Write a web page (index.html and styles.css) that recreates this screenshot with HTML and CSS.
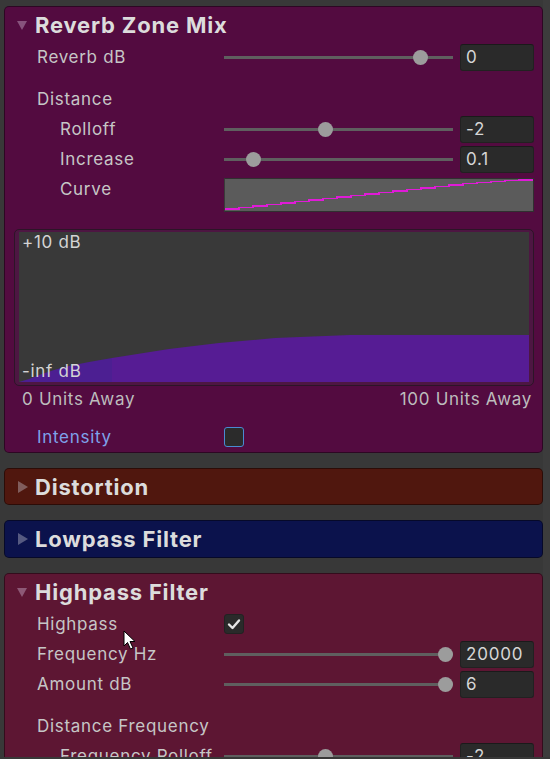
FILE: index.html
```html
<!DOCTYPE html>
<html>
<head>
<meta charset="utf-8">
<title>Audio Mixer Inspector</title>
<link rel="stylesheet" href="styles.css">
</head>
<body>
<div class="viewport">
  <div class="inspector">
    <section class="panel reverb">
      <div class="ph"><span class="tri down"></span><span class="title">Reverb Zone Mix</span></div>
      <div class="row">
        <span class="label">Reverb dB</span>
        <div class="slider"><div class="track"></div><div class="thumb" style="--p:0.884"></div></div>
        <div class="num">0</div>
      </div>
      <div class="row group">
        <span class="label">Distance</span>
      </div>
      <div class="row">
        <span class="label indent">Rolloff</span>
        <div class="slider"><div class="track"></div><div class="thumb" style="--p:0.437"></div></div>
        <div class="num">-2</div>
      </div>
      <div class="row">
        <span class="label indent">Increase</span>
        <div class="slider"><div class="track"></div><div class="thumb" style="--p:0.102"></div></div>
        <div class="num">0.1</div>
      </div>
      <div class="row curve-row">
        <span class="label indent">Curve</span>
        <div class="curve">
          <svg width="310" height="34" viewBox="0 0 310 34" shape-rendering="crispEdges">
            <polyline fill="none" stroke="#e01ad8" stroke-width="1.5" points="1,31 15,31 15,29.5 29,29.5 29,28 43,28 43,26.5 57,26.5 57,25 71,25 71,23.5 85,23.5 85,22 99,22 99,20.5 113,20.5 113,19 127,19 127,17.5 141,17.5 141,16 155,16 155,14.5 169,14.5 169,13 183,13 183,11.5 197,11.5 197,10 211,10 211,8.5 225,8.5 225,7 239,7 239,5.5 253,5.5 253,4.5 267,4.5 267,3.5 281,3.5 281,2.5 295,2.5 295,2 309,2"/>
          </svg>
        </div>
      </div>
      <div class="graph">
        <div class="graph-inner">
          <svg class="fill" width="510" height="150" viewBox="0 0 510 150" preserveAspectRatio="none">
            <polygon fill="#561c94" points="93,126 150,117 200,111 256,106 331,103 510,103 510,150 93,150"/>
            <polygon fill="#4c1f92" points="0,150 10,147 20,143 35,138 50,134 70,130 93,126 93,150"/>
          </svg>
          <span class="g-top">+10 dB</span>
          <span class="g-bot">-inf dB</span>
        </div>
      </div>
      <div class="axis"><span>0 Units Away</span><span>100 Units Away</span></div>
      <div class="row">
        <span class="label blue">Intensity</span>
        <div class="check focus"></div>
      </div>
    </section>

    <section class="panel distortion">
      <div class="ph"><span class="tri right"></span><span class="title">Distortion</span></div>
    </section>

    <section class="panel lowpass">
      <div class="ph tall"><span class="tri right"></span><span class="title">Lowpass Filter</span></div>
    </section>

    <section class="panel highpass">
      <div class="ph"><span class="tri down"></span><span class="title">Highpass Filter</span></div>
      <div class="row">
        <span class="label">Highpass</span>
        <div class="check">
          <svg width="20" height="20" viewBox="0 0 20 20"><path d="M5 10.5 L8.5 14 L15 6.5" fill="none" stroke="#e6e6e6" stroke-width="2.4" stroke-linecap="round" stroke-linejoin="round"/></svg>
        </div>
      </div>
      <div class="row">
        <span class="label">Frequency Hz</span>
        <div class="slider"><div class="track"></div><div class="thumb" style="--p:1"></div></div>
        <div class="num">20000</div>
      </div>
      <div class="row">
        <span class="label">Amount dB</span>
        <div class="slider"><div class="track"></div><div class="thumb" style="--p:1"></div></div>
        <div class="num">6</div>
      </div>
      <div class="row group">
        <span class="label">Distance Frequency</span>
      </div>
      <div class="row">
        <span class="label indent">Frequency Rolloff</span>
        <div class="slider"><div class="track"></div><div class="thumb" style="--p:0.437"></div></div>
        <div class="num">-2</div>
      </div>
    </section>
  </div>
  <svg class="cursor" width="14" height="20" viewBox="0 0 14 20">
    <path d="M1 1 L1 16 L4.5 12.5 L7.5 19 L10 18 L7 11.5 L12 11.5 Z" fill="#ffffff" stroke="#000000" stroke-width="1" stroke-linejoin="miter"/>
  </svg>
</div>
</body>
</html>
```

FILE: styles.css
```css
* { box-sizing: border-box; }
html, body { margin: 0; padding: 0; }
body {
  background: #383838;
  font-family: Inter, "Noto Sans", sans-serif;
  color: #c6c6c6;
  width: 550px;
  height: 759px;
  overflow: hidden;
}
.viewport {
  position: relative;
  height: 757px;
  overflow: hidden;
  border-right: 7px solid #3c3c3c;
}
.inspector {
  display: flex;
  flex-direction: column;
  gap: 15px;
  padding: 6px 0 0 4px;
}
.panel {
  border: 1px solid rgba(0, 0, 0, 0.45);
  border-radius: 5px;
  display: flex;
  flex-direction: column;
  padding-right: 8px;
}
.reverb { background: #530b40; }
.distortion { background: #50170e; }
.lowpass { background: #0b124c; }
.highpass { background: #5d1633; }

.ph {
  height: 35px;
  display: flex;
  align-items: center;
  padding-left: 12px;
}
.ph.tall { height: 36px; }
.tri {
  width: 0; height: 0;
  margin-right: 8px;
}
.tri.down {
  border-left: 5px solid transparent;
  border-right: 5px solid transparent;
  border-top: 9px solid rgba(200, 170, 200, 0.45);
  margin-top: 2px;
}
.tri.right {
  border-top: 6px solid transparent;
  border-bottom: 6px solid transparent;
  border-left: 10px solid rgba(200, 200, 210, 0.4);
  margin-left: 1px;
  margin-right: 7px;
}
.title {
  font-weight: 700;
  font-size: 22px;
  color: #dcdcdc;
  letter-spacing: 0.8px;
}

.row {
  height: 30px;
  display: flex;
  align-items: center;
  padding-left: 32px;
}
.row.group { margin-top: 12px; }
.label {
  width: 187px;
  flex: none;
  font-size: 17px;
  letter-spacing: 0.7px;
  white-space: nowrap;
}
.label.indent { padding-left: 23px; }
.label.blue { color: #7ea2ea; }

.slider {
  position: relative;
  flex: 1;
  height: 30px;
  margin-right: 7px;
}
.track {
  position: absolute;
  left: 0; right: 0;
  top: 14px;
  height: 3px;
  background: #5f5f5f;
}
.thumb {
  position: absolute;
  top: 8px;
  width: 15px;
  height: 15px;
  border-radius: 50%;
  background: #9c9c9c;
  left: calc(var(--p) * (100% - 15px));
}
.num {
  width: 74px;
  height: 27px;
  flex: none;
  background: #2a2a2a;
  border: 1px solid #212121;
  border-top-color: #1a1a1a;
  border-radius: 3px;
  font-size: 17px;
  color: #d6d6d6;
  padding-left: 5px;
  display: flex;
  align-items: center;
  letter-spacing: 0.8px;
}

.curve-row {
  height: 40px;
  align-items: flex-start;
}
.curve-row .label { line-height: 30px; }
.curve {
  flex: 1;
  margin-top: 4px;
  height: 34px;
  background: #5b5b5b;
  border: 1px solid #303030;
  border-left-color: #3a3a3a;
  overflow: hidden;
}
.curve svg { display: block; margin: -1px 0 0 -1px; }

.graph {
  margin: 15px 0 0 9px;
  height: 157px;
  border: 1px solid #2c1527;
  border-radius: 5px;
  background: #4d1642;
  padding: 2px 4px 3px 4px;
}
.graph-inner {
  position: relative;
  height: 100%;
  background: #393939;
  overflow: hidden;
}
.graph-inner .fill { position: absolute; left: 0; bottom: 0; width: 100%; height: 150px; display: block; }
.g-top, .g-bot {
  position: absolute;
  left: 3px;
  font-size: 17px;
  color: #d4d4d4;
  letter-spacing: 0.7px;
}
.g-top { top: 0; }
.g-bot { bottom: 1px; }

.axis {
  display: flex;
  justify-content: space-between;
  padding: 3px 2px 0 17px;
  height: 36px;
  font-size: 17px;
  line-height: 20px;
  color: #bdbdbd;
  letter-spacing: 0.7px;
}

.check {
  width: 20px;
  height: 20px;
  flex: none;
  background: #2a2a2a;
  border-radius: 3px;
  border: 1px solid #222;
}
.check.focus { border: 1px solid #4a8ad2; background: #2b2b2b; }
.check svg { display: block; margin: -1px; }

.cursor {
  position: absolute;
  left: 123px;
  top: 630px;
}
```
